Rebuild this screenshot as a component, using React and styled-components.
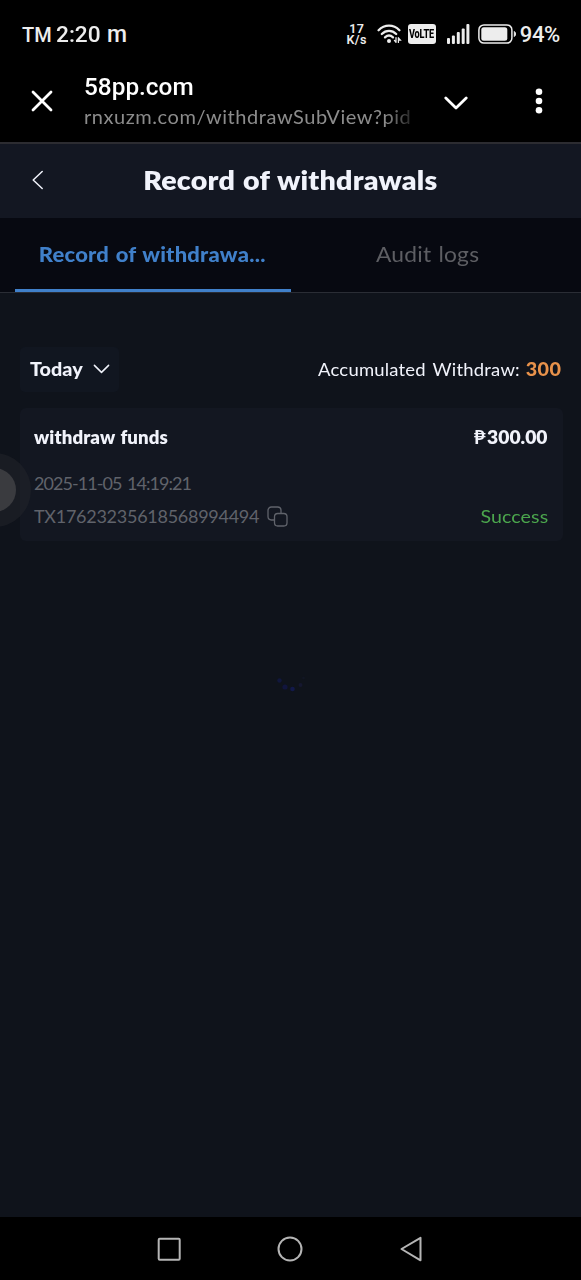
import React from 'react'
import styled, { createGlobalStyle } from 'styled-components'

const GlobalStyle = createGlobalStyle`
    * {
        box-sizing: border-box;
    }

    body {
        margin: 0;
        background-color: #0f131b;
    }

    p, h1, h2 {
        margin: 0;
    }

    svg {
        display: block;
        flex-shrink: 0;
    }

    button {
        padding: 0;
        border: 0;
        background: none;
        color: inherit;
        font: inherit;
    }
`;

const Screen = styled.div`
    display: flex;
    flex-direction: column;
    position: relative;
    width: 581px;
    height: 1280px;
    overflow: hidden;

    background-color: #0f131b;
    color: #f1f3fb;
    font-family: Lato, "Open Sans", sans-serif;
`;

/* $stretch widens the letters, growing away from $origin */
const Text = styled.p`
    font-size: ${props => props.$size}px;
    font-weight: ${props => props.$weight || 400};
    line-height: ${props => props.$line || 24}px;
    letter-spacing: ${props => props.$track || 0}px;
    word-spacing: ${props => props.$word || 0}px;
    color: ${props => props.$color || 'inherit'};
    white-space: nowrap;
    transform: scaleX(${props => props.$stretch || 1});
    transform-origin: ${props => props.$origin || 'left'} center;
`;

const StatusBar = styled.div`
    display: flex;
    align-items: center;
    justify-content: space-between;
    height: 68px;
    padding: 0 22px;

    background-color: #000;
    color: #ededed;
    font-family: Roboto, sans-serif;
`;

const Clock = styled.div`
    display: flex;
    align-items: baseline;
    padding-top: 2px;

    .time {
        margin-left: 4px;
    }
    .app {
        margin-left: 8px;
    }
`;

const StatusIcons = styled.div`
    display: flex;
    align-items: center;

    .wifi {
        margin-left: 9px;
    }
    .signal {
        margin-left: 11px;
    }
    .battery {
        margin-left: 8px;
        margin-right: 3px;
    }
    .percent {
        padding-top: 2px;
        margin-right: -1px;
    }
`;

const Speed = styled.p`
    width: 22px;

    font-size: 12.5px;
    font-weight: 600;
    line-height: 11px;
    letter-spacing: 0.4px;
    text-align: center;
    white-space: pre;
`;

const Volte = styled.div`
    display: flex;
    align-items: center;
    justify-content: center;
    width: 28px;
    height: 20px;
    margin-left: 6px;
    border-radius: 3px;

    background-color: #ededed;
    color: #000;

    span {
        font-size: 12px;
        font-weight: 800;
        letter-spacing: -0.2px;
        transform: scaleX(0.76);
    }
`;

const BrowserBar = styled.div`
    display: flex;
    align-items: center;
    height: 74px;
    padding: 0 38px 8px 31px;

    background-color: #000;
    color: #fff;
    font-family: Roboto, sans-serif;

    .close {
        width: 53px;
    }
    .expand {
        margin-left: 32px;
        padding-top: 3px;
    }
    .menu {
        margin-left: auto;
    }
`;

const Address = styled.div`
    width: 328px;
    overflow: hidden;

    .url {
        font-family: Lato, sans-serif;
        mask-image: linear-gradient(to right, #000 92%, rgba(0, 0, 0, 0.25) 100%);
    }
`;

const Header = styled.div`
    display: grid;
    grid-template-columns: 76px 1fr 76px;
    align-items: center;
    height: 76px;
    padding-bottom: 2px;
    border-top: 2px solid #2c2c31;

    background-color: #131722;

    .back {
        margin-left: 31px;
    }
    h1 {
        justify-self: center;
    }
`;

const Tabs = styled.div`
    display: grid;
    grid-template-columns: 276px 276px;
    height: 75px;
    padding-left: 15px;
    border-bottom: 1px solid #2a2d35;

    background-color: #070911;
`;

const Tab = styled.button`
    display: flex;
    align-items: center;
    justify-content: center;
    padding: 0 2px 2px 0;
    border-top: 3px solid transparent;
    border-bottom: 3px solid ${props => props.$active ? '#4080ca' : 'transparent'};
`;

const Content = styled.div`
    flex: 1;
    padding: 54px 18px 0 20px;
`;

const Filters = styled.div`
    display: flex;
    align-items: center;
    justify-content: space-between;
    height: 45px;

    .total {
        display: flex;
        gap: 9px;
        padding: 0 2px 2px 0;
    }
`;

const DateSelect = styled.button`
    display: flex;
    align-items: center;
    gap: 15px;
    height: 45px;
    padding: 0 9px 2px 10px;
    border-radius: 5px;

    background-color: #111620;
`;

const Card = styled.div`
    width: 543px;
    height: 133px;
    margin-top: 16px;
    padding: 17px 15px 0 14px;
    border-radius: 6px;

    background-color: #131721;
`;

const Row = styled.div`
    display: flex;
    align-items: center;
    justify-content: space-between;
    height: 24px;
    margin-top: ${props => props.$top || 0}px;
`;

const Reference = styled.div`
    display: flex;
    align-items: center;
    gap: 8px;
`;

const Amount = styled.div`
    display: flex;
    align-items: center;
    gap: 6px;
`;

const Loader = styled.div`
    display: flex;
    justify-content: center;
    margin-top: 130px;
    padding-right: 2px;
`;

const FloatingButton = styled.div`
    display: flex;
    align-items: center;
    justify-content: center;
    position: absolute;
    top: 453px;
    left: -43px;
    width: 74px;
    height: 74px;
    border-radius: 50%;

    background-color: rgba(36, 38, 44, 0.5);

    span {
        width: 44px;
        height: 44px;
        border-radius: 50%;
        background-color: #3a3b3f;
    }
`;

const NavBar = styled.div`
    display: flex;
    align-items: center;
    height: 63px;
    padding-left: 157px;

    background-color: #000;

    .home {
        margin-left: 96px;
    }
    .previous {
        margin-left: 97px;
    }
`;

function WifiIcon() {
    return (
        <svg className="wifi" width="25" height="20" viewBox="0 0 25 20" fill="none" stroke="#ededed" strokeWidth="2.3" strokeLinecap="round">
            <path d="M1.6 6.2C7.5 .2 16.5 .2 22.4 6.2" />
            <path d="M4.8 10C9 5.8 15 5.8 19.2 10" />
            <path d="M8 13.4C10.4 11.2 13.6 11.2 16 13.4" />
            <circle cx="12" cy="17" r="2" fill="#ededed" stroke="none" />
            <path d="M19 13.6v4.6M17.4 16.4l1.6 1.8M21.4 18.4v-4.6M21.4 13.8l2 2.4h-2" strokeWidth="1.3" />
        </svg>
    )
}

function SignalIcon() {
    return (
        <svg className="signal" width="23" height="20" viewBox="0 0 23 20" fill="#ededed">
            <rect x="0" y="14" width="3" height="6" rx="1" />
            <rect x="4.9" y="11.5" width="3" height="8.5" rx="1" />
            <rect x="9.8" y="8" width="3" height="12" rx="1" />
            <rect x="14.7" y="4.5" width="3" height="15.5" rx="1" />
            <rect x="19.4" y="0" width="3" height="20" rx="1" />
        </svg>
    )
}

function BatteryIcon() {
    return (
        <svg className="battery" width="39" height="20" viewBox="0 0 39 20">
            <rect x=".9" y=".9" width="33" height="18.2" rx="5" fill="none" stroke="#ededed" strokeWidth="1.5" />
            <rect x="3.3" y="3.3" width="26" height="13.4" rx="2.5" fill="#ededed" />
            <path d="M36.3 7.5c1.6.6 1.6 4.4 0 5z" fill="#ededed" stroke="#ededed" />
        </svg>
    )
}

export default function App() {
    return (
        <Screen>
            <GlobalStyle />
            <StatusBar>
                <Clock>
                    <Text $size={20} $weight={500}>TM</Text>
                    <Text className="time" $size={22} $weight={500} $stretch={1.03}>2:20</Text>
                    <Text className="app" $size={23} $weight={500}>m</Text>
                </Clock>
                <StatusIcons>
                    <Speed>{'17\nK/s'}</Speed>
                    <WifiIcon />
                    <Volte><span>VoLTE</span></Volte>
                    <SignalIcon />
                    <BatteryIcon />
                    <Text className="percent" $size={22} $weight={500} $track={-0.3}>94%</Text>
                </StatusIcons>
            </StatusBar>
            <BrowserBar>
                <button className="close">
                    <svg width="22" height="22" viewBox="0 0 22 22" stroke="#fff" strokeWidth="2.8" strokeLinecap="round">
                        <path d="M2 2l18 18M20 2L2 20" />
                    </svg>
                </button>
                <Address>
                    <Text $size={24} $weight={500} $line={30} $stretch={1.015}>58pp.com</Text>
                    <Text className="url" $size={20} $line={28} $color="#8c8c8c" $track={0.55}>rnxuzm.com/withdrawSubView?pid</Text>
                </Address>
                <button className="expand">
                    <svg width="24" height="14" viewBox="0 0 24 14" fill="none" stroke="#fff" strokeWidth="2.8" strokeLinecap="round" strokeLinejoin="round">
                        <path d="M1.8 2L12 12 22.2 2" />
                    </svg>
                </button>
                <button className="menu">
                    <svg width="8" height="26" viewBox="0 0 8 26" fill="#fff">
                        <circle cx="4" cy="3.8" r="3.3" />
                        <circle cx="4" cy="13" r="3.3" />
                        <circle cx="4" cy="22.2" r="3.3" />
                    </svg>
                </button>
            </BrowserBar>
            <Header>
                <button className="back">
                    <svg width="13" height="20" viewBox="0 0 13 20" fill="none" stroke="#f1f3fb" strokeWidth="1.5" strokeLinecap="round" strokeLinejoin="round">
                        <path d="M11.2 1.5L2.2 10l9 8.5" />
                    </svg>
                </button>
                <Text as="h1" $size={25.5} $weight={800} $line={34} $track={0.2} $word={1} $stretch={1.12} $origin="center">Record of withdrawals</Text>
            </Header>
            <Tabs>
                <Tab $active>
                    <Text as="span" $size={20} $weight={900} $color="#4080ca" $track={0.2} $word={1} $stretch={1.1} $origin="center">Record of withdrawa...</Text>
                </Tab>
                <Tab>
                    <Text as="span" $size={21} $color="#5d5e63" $track={0.2} $word={1} $stretch={1.085} $origin="center">Audit logs</Text>
                </Tab>
            </Tabs>
            <Content>
                <Filters>
                    <DateSelect>
                        <Text as="span" $size={18} $weight={900} $stretch={1.1}>Today</Text>
                        <svg width="17" height="10" viewBox="0 0 17 10" fill="none" stroke="#f1f3fb" strokeWidth="1.5" strokeLinecap="round" strokeLinejoin="round">
                            <path d="M1.4 1.4l7.1 7 7.1-7" />
                        </svg>
                    </DateSelect>
                    <div className="total">
                        <Text $size={18} $track={0.2} $word={2} $stretch={1.025} $origin="right">Accumulated Withdraw:</Text>
                        <Text $size={18} $weight={900} $color="#e8924b" $track={0.3} $stretch={1.1} $origin="right">300</Text>
                    </div>
                </Filters>
                <Card>
                    <Row>
                        <Text as="h2" $size={18} $weight={800} $track={0.1} $word={1} $stretch={1.035}>withdraw funds</Text>
                        <Amount>
                            <Text $size={18} $weight={700} $stretch={1.1} $origin="right">₱</Text>
                            <Text $size={18} $weight={800} $stretch={1.07} $origin="right">300.00</Text>
                        </Amount>
                    </Row>
                    <Row $top={22}>
                        <Text $size={18} $color="#60636b" $track={-0.95} $word={2}>2025-11-05 14:19:21</Text>
                    </Row>
                    <Row $top={9}>
                        <Reference>
                            <Text $size={18} $color="#60636b" $track={-0.27}>TX17623235618568994494</Text>
                            <svg width="21" height="21" viewBox="0 0 21 21" fill="none" stroke="#60636b" strokeWidth="1.3">
                                <path d="M7.5 14H4.4A3.4 3.4 0 0 1 1 10.6V4.4A3.4 3.4 0 0 1 4.4 1h6.2A3.4 3.4 0 0 1 14 4.4v3.1" />
                                <rect x="7.5" y="7.5" width="12.5" height="12.5" rx="3.2" />
                            </svg>
                        </Reference>
                        <Text $size={18} $color="#4ba64d" $track={0.1} $stretch={1.09} $origin="right">Success</Text>
                    </Row>
                </Card>
                <Loader>
                    <svg width="28" height="24" viewBox="0 0 28 24">
                        <circle cx="2.5" cy="9.5" r="2.2" fill="#11173d" />
                        <circle cx="8" cy="16" r="2.6" fill="#11153d" />
                        <circle cx="15.5" cy="18" r="2.3" fill="#12194a" />
                        <circle cx="23.5" cy="14" r="2" fill="#15172f" />
                        <circle cx="26.5" cy="7" r="1.3" fill="#111623" />
                    </svg>
                </Loader>
            </Content>
            <FloatingButton><span /></FloatingButton>
            <NavBar>
                <svg width="24" height="24" viewBox="0 0 24 24" fill="none" stroke="#b5b5b5" strokeWidth="2">
                    <rect x="1.7" y="1.7" width="21" height="21" rx="1" />
                </svg>
                <svg className="home" width="26" height="26" viewBox="0 0 26 26" fill="none" stroke="#b5b5b5" strokeWidth="2">
                    <circle cx="13" cy="13" r="11.5" />
                </svg>
                <svg className="previous" width="23" height="26" viewBox="0 0 23 26" fill="none" stroke="#b5b5b5" strokeWidth="2" strokeLinejoin="round">
                    <path d="M20.5 1.8v22.5L1.5 13z" />
                </svg>
            </NavBar>
        </Screen>
    )
}
